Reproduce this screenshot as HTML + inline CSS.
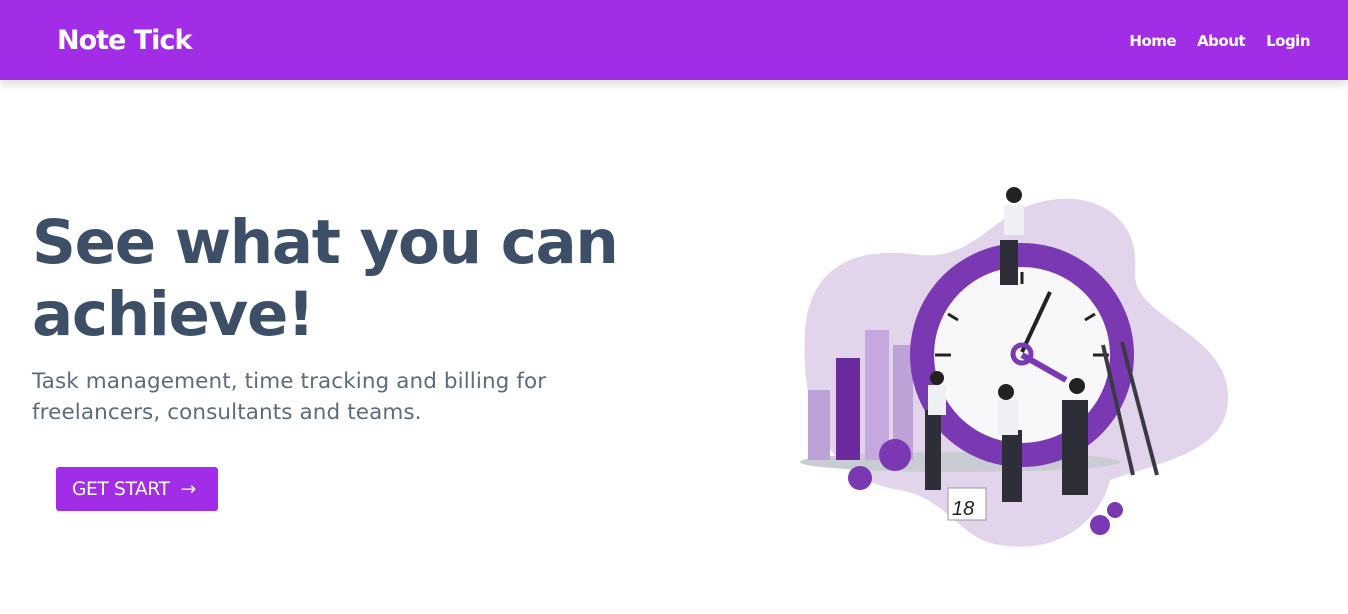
<!DOCTYPE html>
<html><head><meta charset="utf-8"><style>
*{margin:0;padding:0;box-sizing:border-box}
body{width:1348px;height:614px;background:#fff;font-family:"DejaVu Sans","Liberation Sans",sans-serif;overflow:hidden;position:relative}
.nav{position:absolute;left:0;top:0;width:1348px;height:80px;background:#a12de6;box-shadow:0 4px 10px rgba(0,0,0,.15)}
.logo{position:absolute;left:57px;top:25px;color:#fff;font-weight:bold;font-size:27px;letter-spacing:-1px}
.links{position:absolute;right:38px;top:32px;color:#fff;font-weight:bold;font-size:15px;letter-spacing:-.5px}
.links span{margin-left:21px}
h1{position:absolute;left:32px;top:207px;font-size:61px;line-height:72px;color:#3d4f66;font-weight:bold;letter-spacing:-1.3px}
p{position:absolute;left:32px;top:366px;font-size:21.5px;line-height:31px;color:#5d6b7b;letter-spacing:.1px}
.btn{position:absolute;left:56px;top:467px;width:162px;height:44px;background:#a12de6;border-radius:3px;color:#fff;font-size:18.5px;line-height:45px;padding-left:16px;letter-spacing:-.3px;font-weight:500}
</style></head><body>
<div class="nav"><div class="logo">Note Tick</div><div class="links"><span>Home</span><span>About</span><span>Login</span></div></div>
<h1>See what you can<br>achieve!</h1>
<p>Task management, time tracking and billing for<br>freelancers, consultants and teams.</p>
<div class="btn">GET START &nbsp;→</div>
<svg style="position:absolute;left:0;top:0" width="1348" height="614">
<path d="M1030 205 C1090 185 1140 215 1135 270 C1130 320 1230 330 1228 400 C1226 450 1170 460 1110 480 C1100 520 1060 555 1000 545 C960 540 950 500 900 490 C830 480 800 420 805 330 C810 270 850 245 920 255 C970 260 990 220 1030 205Z" fill="#e2d4ea"/>
<ellipse cx="960" cy="462" rx="160" ry="10" fill="#c9cdd3"/>
<rect x="808" y="390" width="22" height="70" fill="#bca2d6"/>
<rect x="836" y="358" width="24" height="102" fill="#6b2a9e"/>
<rect x="865" y="330" width="24" height="130" fill="#c4a8df"/>
<rect x="893" y="345" width="20" height="115" fill="#bca2d6"/>
<circle cx="1022" cy="355" r="112" fill="#7a39b3"/>
<circle cx="1022" cy="355" r="88" fill="#f8f8fb"/>
<g stroke="#222" stroke-width="3"><line x1="1022" y1="272" x2="1022" y2="284"/><line x1="935" y1="355" x2="951" y2="355"/><line x1="1093" y1="355" x2="1109" y2="355"/><line x1="948" y1="314" x2="958" y2="320"/><line x1="1085" y1="320" x2="1095" y2="314"/></g>
<line x1="1022" y1="352" x2="1050" y2="292" stroke="#222" stroke-width="4"/>
<line x1="1022" y1="355" x2="1066" y2="380" stroke="#7a39b3" stroke-width="6"/>
<circle cx="1022" cy="354" r="9" fill="none" stroke="#7a39b3" stroke-width="5"/>
<g stroke="#3a3a44" stroke-width="4"><line x1="1103" y1="345" x2="1133" y2="475"/><line x1="1122" y1="342" x2="1157" y2="475"/></g>
<circle cx="895" cy="455" r="16" fill="#7a39b3"/><circle cx="860" cy="478" r="12" fill="#7a39b3"/><circle cx="1100" cy="525" r="10" fill="#7a39b3"/><circle cx="1115" cy="510" r="8" fill="#7a39b3"/>
<rect x="948" y="488" width="38" height="32" fill="#fff" stroke="#999"/><text x="952" y="515" font-size="20" font-family="Liberation Sans" font-style="italic" fill="#222">18</text>
<g fill="#2e2e38"><rect x="1000" y="240" width="18" height="45"/><rect x="925" y="410" width="16" height="80"/><rect x="1002" y="430" width="20" height="72"/><rect x="1062" y="400" width="26" height="95"/></g>
<g fill="#eef0f4"><rect x="1004" y="205" width="20" height="30"/><rect x="928" y="385" width="18" height="30"/><rect x="998" y="400" width="20" height="35"/></g>
<g fill="#222"><circle cx="1014" cy="195" r="8"/><circle cx="937" cy="378" r="7"/><circle cx="1006" cy="392" r="8"/><circle cx="1077" cy="386" r="8"/></g>
</svg>
</body></html>
